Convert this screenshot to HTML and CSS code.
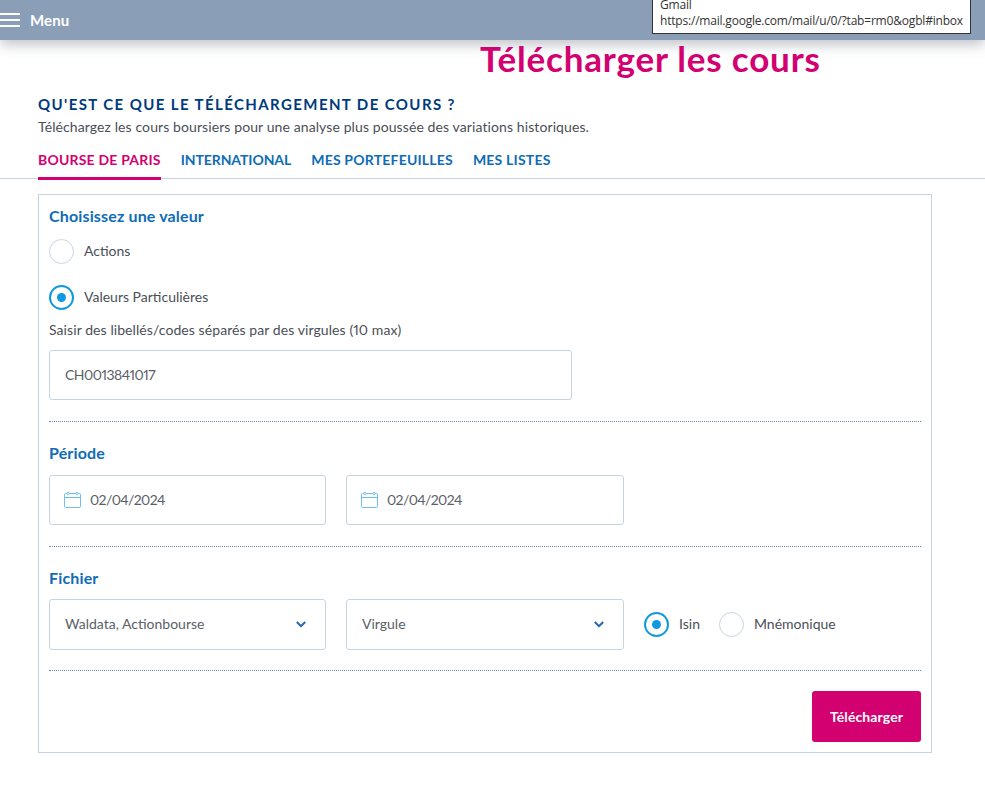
FILE: index.html
```html
<!DOCTYPE html>
<html lang="fr">
<head>
    <meta charset="utf-8">
    <title>Télécharger les cours</title>
    <link rel="stylesheet" href="styles.css">
</head>

<body>

    <header class="topbar">
        <span class="burger"><i></i><i></i><i></i></span>
        <span class="menu-label">Menu</span>
    </header>

    <div class="link-tooltip">Gmail<br>https://mail.google.com/mail/u/0/?tab=rm0&amp;ogbl#inbox</div>

    <h1 class="page-title">Télécharger les cours</h1>

    <h2 class="intro-title">QU'EST CE QUE LE TÉLÉCHARGEMENT DE COURS ?</h2>
    <p class="intro-text">Téléchargez les cours boursiers pour une analyse plus poussée des variations historiques.</p>

    <nav class="tabs">
        <a class="tab active" href="#">BOURSE DE PARIS</a>
        <a class="tab tab-intl" href="#">INTERNATIONAL</a>
        <a class="tab" href="#">MES PORTEFEUILLES</a>
        <a class="tab" href="#">MES LISTES</a>
    </nav>

    <div class="panel">
        <h3 class="section-title first">Choisissez une valeur</h3>
        <div class="radio-row row-actions"><span class="radio"></span><span class="radio-label">Actions</span></div>
        <div class="radio-row row-values"><span class="radio checked"></span><span class="radio-label">Valeurs Particulières</span></div>
        <p class="help">Saisir des libellés/codes séparés par des virgules (10 max)</p>
        <div class="field field-code">CH0013841017</div>
        <hr class="divider">

        <h3 class="section-title">Période</h3>
        <div class="field-row">
            <div class="field field-date">
                <svg class="calendar" width="18" height="18" viewBox="0 0 18 18" fill="none" stroke="#6dbdf0" stroke-width="1">
                    <rect x="0.5" y="2.5" width="16" height="14" rx="1"/>
                    <path d="M0.5 6.5H16.5"/>
                    <circle cx="4" cy="2.5" r="1.2" fill="#fff"/>
                    <circle cx="13" cy="2.5" r="1.2" fill="#fff"/>
                </svg>
                02/04/2024
            </div>
            <div class="field field-date">
                <svg class="calendar" width="18" height="18" viewBox="0 0 18 18" fill="none" stroke="#6dbdf0" stroke-width="1">
                    <rect x="0.5" y="2.5" width="16" height="14" rx="1"/>
                    <path d="M0.5 6.5H16.5"/>
                    <circle cx="4" cy="2.5" r="1.2" fill="#fff"/>
                    <circle cx="13" cy="2.5" r="1.2" fill="#fff"/>
                </svg>
                02/04/2024
            </div>
        </div>
        <hr class="divider">

        <h3 class="section-title">Fichier</h3>
        <div class="field-row file-row">
            <div class="field field-select">
                Waldata, Actionbourse
                <svg class="chevron" width="10" height="7" viewBox="0 0 10 7" fill="none" stroke="#1f66b0" stroke-width="2"><path d="M0.8 1L5 5.2L9.2 1"/></svg>
            </div>
            <div class="field field-select">
                Virgule
                <svg class="chevron" width="10" height="7" viewBox="0 0 10 7" fill="none" stroke="#1f66b0" stroke-width="2"><path d="M0.8 1L5 5.2L9.2 1"/></svg>
            </div>
            <div class="radio-row inline"><span class="radio checked"></span><span class="radio-label">Isin</span></div>
            <div class="radio-row inline"><span class="radio"></span><span class="radio-label">Mnémonique</span></div>
        </div>
        <hr class="divider last">

        <div class="actions">
            <button class="button">Télécharger</button>
        </div>
    </div>

</body>
</html>
```

FILE: styles.css
```css
body {
    font-family: 'Lato', 'Liberation Sans', sans-serif;
    font-variant-numeric: proportional-nums;
    background-color: #fff;
    color: #4a4f57;
    margin: 0;
    font-size: 14px;
    line-height: 20px;
    position: relative;
}

.topbar {
    height: 40px;
    background-color: #8a9eb8;
    box-shadow: 0 4px 14px rgba(60, 70, 90, 0.35);
    display: flex;
    align-items: center;
    color: #fff;
}

.burger {
    width: 20px;
    display: flex;
    flex-direction: column;
    gap: 4px;
}

.burger i {
    display: block;
    height: 2px;
    background-color: #fff;
}

.menu-label {
    margin-left: 10px;
    font-size: 15px;
    font-weight: 700;
    letter-spacing: 0.1px;
}

.link-tooltip {
    position: absolute;
    top: -4px;
    left: 652px;
    width: 303px;
    padding: 0 7px;
    height: 36px;
    background-color: #fff;
    border: 1px solid #333;
    font-family: 'Open Sans', sans-serif;
    font-size: 12px;
    line-height: 16px;
    letter-spacing: -0.2px;
    color: #333;
    white-space: nowrap;
}

.page-title {
    margin: 0;
    padding-left: 480px;
    font-size: 35px;
    line-height: 36px;
    padding-bottom: 4px;
    font-weight: 700;
    letter-spacing: 0.8px;
    color: #d20070;
}

.intro-title {
    margin: 14px 0 0 38px;
    font-size: 15px;
    line-height: 20px;
    font-weight: 700;
    letter-spacing: 1.4px;
    color: #003a7d;
}

.intro-text {
    margin: 3px 0 0 38px;
    letter-spacing: 0.1px;
}

.tabs {
    margin-top: 5px;
    padding-left: 38px;
    display: flex;
    gap: 20px;
    border-bottom: 1px solid #c5d5e3;
}

.tab {
    padding: 8px 0 7px;
    margin-bottom: -2px;
    border-bottom: 3px solid transparent;
    font-size: 14px;
    font-weight: 700;
    letter-spacing: 0.2px;
    color: #0f6cb6;
    text-decoration: none;
}

.tab-intl {
    letter-spacing: -0.08px;
}

.tab.active {
    color: #d20070;
    border-bottom-color: #d20070;
}

.panel {
    margin: 15px 0 0 38px;
    width: 872px;
    padding: 12px 10px 10px;
    border: 1px solid #c5d5e3;
}

.section-title {
    margin: 22px 0 0;
    font-size: 16px;
    line-height: 18px;
    font-weight: 700;
    letter-spacing: 0.15px;
    color: #0f6cb6;
}

.section-title.first {
    margin-top: 0;
}

.radio-row {
    display: flex;
    align-items: center;
    gap: 10px;
}

.radio-label {
    margin-top: -2px;
}

.row-actions {
    margin-top: 14px;
}

.row-values {
    margin-top: 21px;
}

.radio {
    box-sizing: border-box;
    width: 25px;
    height: 25px;
    flex: none;
    border: 1px solid #c9d5e4;
    border-radius: 50%;
    display: flex;
    align-items: center;
    justify-content: center;
}

.radio.checked {
    border: 2px solid #0f9ae0;
}

.radio.checked::after {
    content: "";
    width: 9px;
    height: 9px;
    border-radius: 50%;
    background-color: #0f9ae0;
}

.help {
    margin: 10px 0 0;
    letter-spacing: 0.08px;
}

.field {
    box-sizing: border-box;
    height: 50px;
    margin-top: 10px;
    padding: 0 15px;
    border: 1px solid #c5d5e3;
    border-radius: 3px;
    display: flex;
    align-items: center;
    color: #5a6068;
}

.field-code {
    width: 523px;
    letter-spacing: -0.5px;
}

.field-date {
    letter-spacing: -0.6px;
}

.field-row {
    display: flex;
    align-items: center;
    gap: 20px;
    margin-top: 13px;
}

.field-row .field {
    margin-top: 0;
    width: 277px;
}

.field-row .field + .field {
    width: 278px;
}

.calendar {
    margin: 0 8px 0 -1px;
}

.file-row {
    margin-top: 12px;
}

.file-row .field {
    height: 51px;
}

.field-select {
    justify-content: space-between;
    padding-bottom: 2px;
}

.chevron {
    margin: 2px 4px 0 0;
}

.inline + .inline {
    margin-left: -1px;
}

.divider {
    margin: 21px 0 0;
    border: none;
    border-top: 1px dotted #6a8fae;
}

.divider.last {
    margin-top: 20px;
}

.actions {
    margin-top: 20px;
    display: flex;
    justify-content: flex-end;
}

.button {
    width: 109px;
    height: 51px;
    background-color: #d20070;
    color: #fff;
    border: none;
    border-radius: 3px;
    font-family: inherit;
    font-size: 14px;
    font-weight: 700;
    letter-spacing: 0.1px;
    cursor: pointer;
}
```
